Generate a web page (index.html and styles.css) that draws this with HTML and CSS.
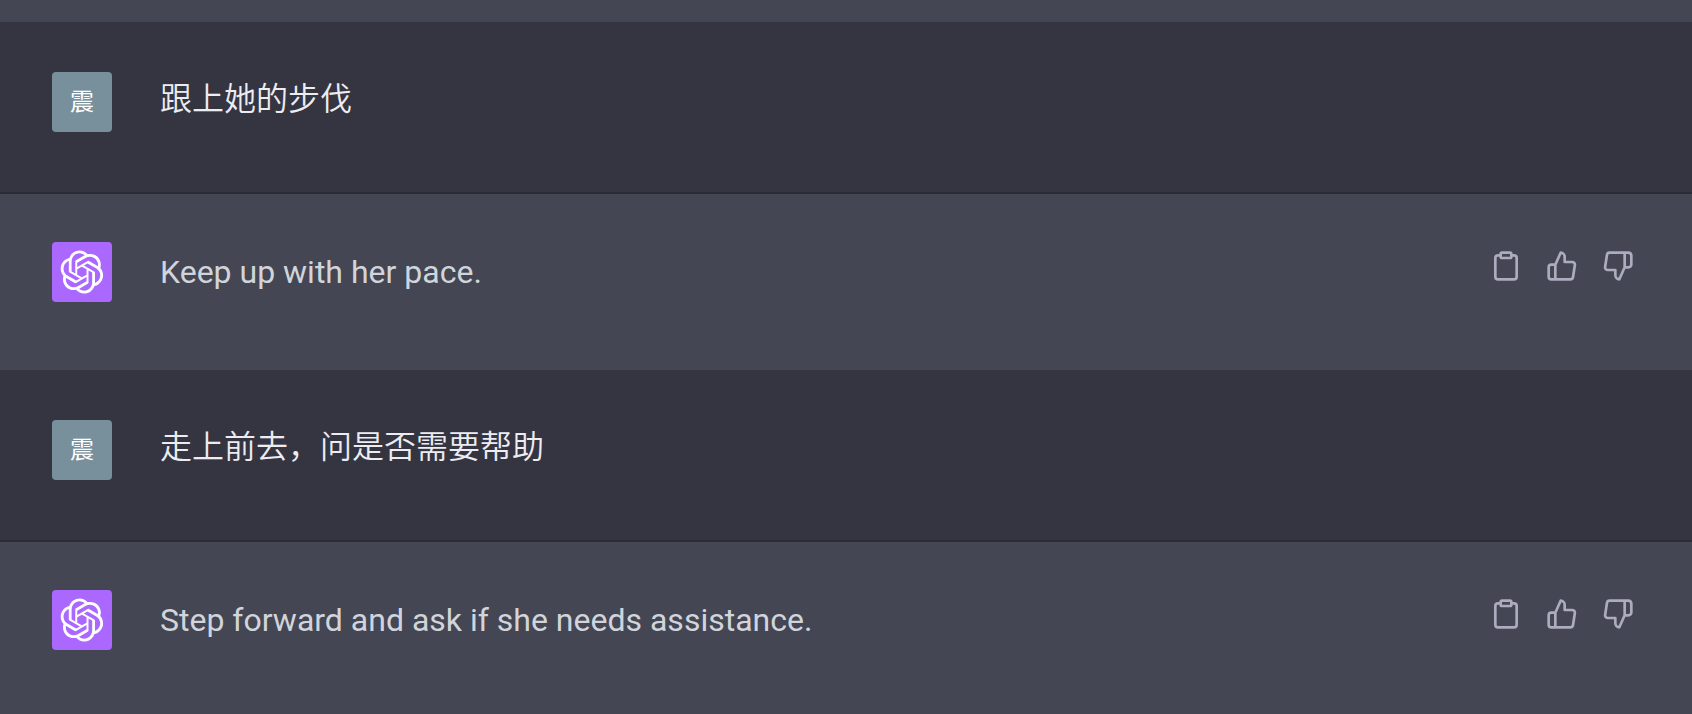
FILE: index.html
```html
<!DOCTYPE html>
<html lang="zh">
<head>
  <meta charset="UTF-8">
  <title>ChatGPT</title>
  <link rel="stylesheet" href="styles.css">
</head>
<body>

  <!-- shared icons -->
  <svg class="sprite" aria-hidden="true">
    <symbol id="logo" viewBox="0 0 41 41">
      <path fill="currentColor" d="M37.5324 16.8707C37.9808 15.5241 38.1363 14.0974 37.9886 12.6859C37.8409 11.2744 37.3934 9.91076 36.676 8.68622C35.6126 6.83404 33.9882 5.3676 32.0373 4.4985C30.0864 3.62941 27.9098 3.40259 25.8215 3.85078C24.8796 2.7893 23.7219 1.94125 22.4257 1.36341C21.1295 0.785575 19.7249 0.491269 18.3058 0.500197C16.1708 0.495044 14.0893 1.16803 12.3614 2.42214C10.6335 3.67624 9.34853 5.44666 8.6917 7.47815C7.30085 7.76286 5.98686 8.3414 4.8377 9.17505C3.68854 10.0087 2.73073 11.0782 2.02839 12.312C0.956464 14.1591 0.498905 16.2988 0.721698 18.4228C0.944492 20.5467 1.83612 22.5449 3.268 24.1293C2.81966 25.4759 2.66413 26.9026 2.81182 28.3141C2.95951 29.7256 3.40701 31.0892 4.12437 32.3138C5.18791 34.1659 6.8123 35.6322 8.76321 36.5013C10.7141 37.3704 12.8907 37.5973 14.9789 37.1492C15.9208 38.2107 17.0786 39.0587 18.3747 39.6366C19.6709 40.2144 21.0755 40.5087 22.4946 40.4998C24.6307 40.5054 26.7133 39.8321 28.4418 38.5772C30.1704 37.3223 31.4556 35.5506 32.1119 33.5179C33.5027 33.2332 34.8167 32.6547 35.9659 31.821C37.115 30.9874 38.0728 29.9178 38.7752 28.684C39.8458 26.8371 40.3023 24.6979 40.0789 22.5748C39.8556 20.4517 38.9639 18.4544 37.5324 16.8707ZM22.4978 37.8849C20.7443 37.8874 19.0459 37.2733 17.6994 36.1501C17.7601 36.117 17.8666 36.0586 17.936 36.0161L25.9004 31.4156C26.1003 31.3019 26.2663 31.137 26.3813 30.9378C26.4964 30.7386 26.5563 30.5124 26.5549 30.2825V19.0542L29.9213 20.998C29.9389 21.0068 29.9541 21.0198 29.9656 21.0359C29.977 21.052 29.9842 21.0707 29.9867 21.0902V30.3889C29.9842 32.375 29.1946 34.2791 27.7909 35.6841C26.3872 37.0892 24.4838 37.8806 22.4978 37.8849ZM6.39227 31.0064C5.51397 29.4888 5.19742 27.7107 5.49804 25.9832C5.55718 26.0187 5.66048 26.0818 5.73461 26.1244L13.699 30.7248C13.8975 30.8408 14.1233 30.902 14.3532 30.902C14.583 30.902 14.8088 30.8408 15.0073 30.7248L24.731 25.1103V28.9979C24.7321 29.0177 24.7283 29.0376 24.7199 29.0556C24.7115 29.0736 24.6988 29.0893 24.6829 29.1012L16.6317 33.7497C14.9096 34.7416 12.8643 35.0097 10.9447 34.4954C9.02506 33.9811 7.38785 32.7263 6.39227 31.0064ZM4.29707 13.6194C5.17156 12.0998 6.55279 10.9364 8.19885 10.3327C8.19885 10.4013 8.19491 10.5228 8.19491 10.6071V19.808C8.19351 20.0378 8.25334 20.2638 8.36823 20.4629C8.48312 20.6619 8.64893 20.8267 8.84863 20.9404L18.5723 26.5542L15.206 28.4979C15.1894 28.5089 15.1703 28.5155 15.1505 28.5173C15.1307 28.5191 15.1107 28.516 15.0924 28.5082L7.04046 23.8557C5.32135 22.8601 4.06716 21.2235 3.55289 19.3046C3.03862 17.3858 3.30624 15.3413 4.29707 13.6194ZM31.955 20.0556L22.2312 14.4411L25.5976 12.4981C25.6142 12.4872 25.6333 12.4805 25.6531 12.4787C25.6729 12.4769 25.6928 12.4801 25.7111 12.4879L33.7631 17.1364C34.9967 17.849 36.0017 18.8982 36.6606 20.1613C37.3194 21.4244 37.6047 22.849 37.4832 24.2684C37.3617 25.6878 36.8382 27.0432 35.9743 28.1759C35.1103 29.3086 33.9415 30.1717 32.6047 30.6641C32.6047 30.5947 32.6047 30.4733 32.6047 30.3889V21.188C32.6066 20.9586 32.5474 20.7328 32.4332 20.5338C32.319 20.3348 32.154 20.1698 31.955 20.0556ZM35.3055 15.0128C35.2464 14.9765 35.1431 14.9142 35.069 14.8717L27.1045 10.2712C26.906 10.1554 26.6803 10.0943 26.4504 10.0943C26.2206 10.0943 25.9948 10.1554 25.7963 10.2712L16.0726 15.8858V11.9982C16.0715 11.9783 16.0753 11.9585 16.0837 11.9405C16.0921 11.9225 16.1048 11.9068 16.1207 11.8949L24.1719 7.25025C25.4053 6.53903 26.8158 6.19376 28.2383 6.25482C29.6608 6.31589 31.0364 6.78077 32.2044 7.59508C33.3723 8.40939 34.2842 9.53945 34.8334 10.8531C35.3826 12.1667 35.5464 13.6095 35.3055 15.0128ZM14.2424 21.9419L10.8752 19.9981C10.8576 19.9893 10.8423 19.9763 10.8309 19.9602C10.8195 19.9441 10.8122 19.9254 10.8098 19.9058V10.6071C10.8107 9.18295 11.2173 7.78848 11.9819 6.58696C12.7466 5.38544 13.8377 4.42659 15.1275 3.82264C16.4173 3.21869 17.8524 2.99464 19.2649 3.1767C20.6775 3.35876 22.0089 3.93941 23.1034 4.85067C23.0427 4.88379 22.937 4.94215 22.8668 4.98473L14.9024 9.58517C14.7025 9.69878 14.5366 9.86356 14.4215 10.0626C14.3065 10.2616 14.2466 10.4877 14.2479 10.7175L14.2424 21.9419ZM16.071 17.9991L20.4018 15.4978L24.7325 17.9975V22.9985L20.4018 25.4983L16.071 22.9985V17.9991Z"/>
    </symbol>
    <symbol id="clipboard" viewBox="0 0 24 24">
      <path d="M16 4h2a2 2 0 0 1 2 2v14a2 2 0 0 1-2 2H6a2 2 0 0 1-2-2V6a2 2 0 0 1 2-2h2"/>
      <rect x="8" y="2" width="8" height="4" rx="1" ry="1"/>
    </symbol>
    <symbol id="thumbs-up" viewBox="0 0 24 24">
      <path d="M14 9V5a3 3 0 0 0-3-3l-4 9v11h11.28a2 2 0 0 0 2-1.7l1.38-9a2 2 0 0 0-2-2.3zM7 22H4a2 2 0 0 1-2-2v-7a2 2 0 0 1 2-2h3"/>
    </symbol>
    <symbol id="thumbs-down" viewBox="0 0 24 24">
      <path d="M10 15v4a3 3 0 0 0 3 3l4-9V2H5.72a2 2 0 0 0-2 1.7l-1.38 9a2 2 0 0 0 2 2.3zm7-13h2.67A2.31 2.31 0 0 1 22 4v7a2.31 2.31 0 0 1-2.33 2H17"/>
    </symbol>
  </svg>

  <main class="chat">
    <div class="previous"></div>

    <article class="message user">
      <div class="avatar">震</div>
      <p class="text">跟上她的步伐</p>
    </article>

    <article class="message assistant">
      <div class="avatar"><svg class="logo"><use href="#logo"/></svg></div>
      <p class="text">Keep up with her pace.</p>
      <div class="actions">
        <button type="button" aria-label="Copy"><svg class="icon"><use href="#clipboard"/></svg></button>
        <button type="button" aria-label="Good response"><svg class="icon"><use href="#thumbs-up"/></svg></button>
        <button type="button" aria-label="Bad response"><svg class="icon"><use href="#thumbs-down"/></svg></button>
      </div>
    </article>

    <article class="message user">
      <div class="avatar">震</div>
      <p class="text">走上前去，问是否需要帮助</p>
    </article>

    <article class="message assistant">
      <div class="avatar"><svg class="logo"><use href="#logo"/></svg></div>
      <p class="text">Step forward and ask if she needs assistance.</p>
      <div class="actions">
        <button type="button" aria-label="Copy"><svg class="icon"><use href="#clipboard"/></svg></button>
        <button type="button" aria-label="Good response"><svg class="icon"><use href="#thumbs-up"/></svg></button>
        <button type="button" aria-label="Bad response"><svg class="icon"><use href="#thumbs-down"/></svg></button>
      </div>
    </article>
  </main>

</body>
</html>
```

FILE: styles.css
```css
* {
  box-sizing: border-box;
}

body {
  margin: 0;
  background: #444654;
  color: #ececf1;
  font-family: Roboto, "Noto Sans CJK SC", sans-serif;
  font-size: 32px;
  line-height: 60px;
}

.sprite {
  display: none;
}

.previous {
  height: 22px;
  background: #444654;
}

.message {
  display: flex;
  align-items: flex-start;
  gap: 48px;
  padding: 48px 50px 0 52px;
}

.user {
  padding-top: 50px;
  padding-bottom: 60px;
  background: #343541;
  border-bottom: 2px solid #2b2c34;
}

.assistant {
  padding-bottom: 68px;
  background: #444654;
  color: #d1d5db;
}

.avatar {
  display: flex;
  flex: none;
  align-items: center;
  justify-content: center;
  width: 60px;
  height: 60px;
  border-radius: 4px;
  background: #78909c;
  color: #fff;
  font-size: 24px;
}

.assistant .avatar {
  background: #ab68ff;
}

.logo {
  width: 44px;
  height: 44px;
}

.text {
  flex: 1;
  margin: 0;
}

.user .text {
  font-weight: 350;
  line-height: 54px;
}

.actions {
  display: flex;
  gap: 8px;
}

.actions button {
  display: flex;
  padding: 8px;
  border: 0;
  border-radius: 6px;
  background: none;
  color: #acacbe;
  cursor: pointer;
}

.actions button:hover {
  background: #343541;
}

.icon {
  width: 32px;
  height: 32px;
  fill: none;
  stroke: currentColor;
  stroke-width: 2;
  stroke-linecap: round;
  stroke-linejoin: round;
}
```
